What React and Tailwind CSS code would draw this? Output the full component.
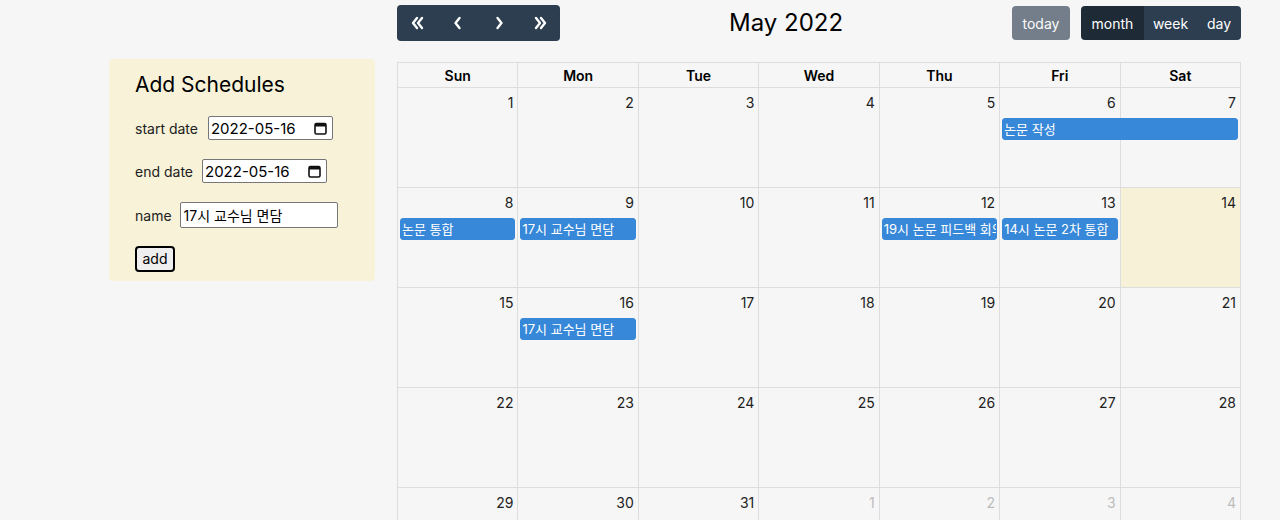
import React from "react";

const FONT = { fontFamily: "Inter, 'Noto Sans CJK KR', sans-serif" };

function Chev({ dir = "left", double = false }) {
  const pts = dir === "left" ? (double ? ["M8 4 L4 9 L8 14", "M13 4 L9 9 L13 14"] : ["M10.5 4 L6.5 9 L10.5 14"]) : (double ? ["M5 4 L9 9 L5 14", "M10 4 L14 9 L10 14"] : ["M7.5 4 L11.5 9 L7.5 14"]);
  return (
    <svg width="18" height="18" viewBox="0 0 18 18" fill="none" stroke="white" strokeWidth="2.4" strokeLinecap="round" strokeLinejoin="round">
      {pts.map((d, i) => <path key={i} d={d} />)}
    </svg>
  );
}

function CalIcon() {
  return (
    <svg width="13" height="13" viewBox="0 0 13 13" fill="none">
      <rect x="1" y="1.5" width="11" height="10.5" rx="1.5" stroke="#111" strokeWidth="1.6" />
      <rect x="1" y="1.5" width="11" height="3" fill="#111" />
    </svg>
  );
}

function DateBox({ w }) {
  return (
    <div className={`flex items-center justify-between h-[24px] bg-white border border-[#767676] rounded-[2px] pl-[2px] pr-[5px] ${w}`}>
      <span className="text-[15px] text-black leading-none">2022-05-16</span>
      <CalIcon />
    </div>
  );
}

const weeks = [
  { days: [1, 2, 3, 4, 5, 6, 7], events: [{ col: "col-start-6 col-span-2", t: "논문 작성" }] },
  {
    days: [8, 9, 10, 11, 12, 13, 14],
    today: 6,
    events: [
      { col: "col-start-1 col-span-1", t: "논문 통합" },
      { col: "col-start-2 col-span-1", t: "17시 교수님 면담" },
      { col: "col-start-5 col-span-1", t: "19시 논문 피드백 회의" },
      { col: "col-start-6 col-span-1", t: "14시 논문 2차 통합" },
    ],
  },
  { days: [15, 16, 17, 18, 19, 20, 21], events: [{ col: "col-start-2 col-span-1", t: "17시 교수님 면담" }] },
  { days: [22, 23, 24, 25, 26, 27, 28], events: [] },
  { days: [29, 30, 31, 1, 2, 3, 4], other: 3, events: [] },
];

const colStarts = ["col-start-1", "col-start-2", "col-start-3", "col-start-4", "col-start-5", "col-start-6", "col-start-7"];

export default function App() {
  return (
    <div className="h-[520px] overflow-hidden bg-[#f6f6f6] flex pl-[109px] text-[#212121]" style={FONT}>
      <div className="w-[266px] h-[222px] mt-[59px] bg-[#f7f2d8] rounded-[4px] pl-[26px] pt-[13px] flex flex-col">
        <h1 className="text-[21px] leading-[26px] text-black">Add Schedules</h1>
        <div className="flex items-center mt-[18px] gap-[10px]">
          <span className="text-[14px]">start date</span>
          <DateBox w="w-[125px]" />
        </div>
        <div className="flex items-center mt-[19px] gap-[9px]">
          <span className="text-[14px]">end date</span>
          <DateBox w="w-[125px]" />
        </div>
        <div className="flex items-center mt-[19px] gap-[8px]">
          <span className="text-[14px]">name</span>
          <div className="w-[158px] h-[26px] bg-white border border-[#767676] rounded-[2px] pl-[3px] flex items-center text-[14px] text-black">
            17시 교수님 면담
          </div>
        </div>
        <div className="mt-[18px]">
          <button className="h-[26px] w-[40px] border-2 border-black rounded-[4px] bg-[#efefef] text-[14px] text-black leading-none">add</button>
        </div>
      </div>

      <div className="ml-[22px] w-[844px] pt-[5px]">
        <div className="flex items-center justify-between h-[36px]">
          <div className="flex h-[36px] bg-[#2c3e50] rounded-[4px] overflow-hidden">
            <button className="w-[41px] flex items-center justify-center"><Chev dir="left" double /></button>
            <button className="w-[40px] flex items-center justify-center"><Chev dir="left" /></button>
            <button className="w-[41px] flex items-center justify-center"><Chev dir="right" /></button>
            <button className="w-[41px] flex items-center justify-center"><Chev dir="right" double /></button>
          </div>
          <h2 className="text-[24px] leading-none text-black">May 2022</h2>
          <div className="flex items-center gap-[11px]">
            <button className="h-[34px] w-[58px] rounded-[4px] bg-[#737e8a] text-[#fcfcfc] text-[14px]">today</button>
            <div className="flex h-[34px] rounded-[4px] overflow-hidden text-[14px] text-white">
              <button className="w-[63px] bg-[#1e2b37]">month</button>
              <button className="w-[53px] bg-[#2c3e50]">week</button>
              <button className="w-[44px] bg-[#2c3e50]">day</button>
            </div>
          </div>
        </div>

        <div className="mt-[21px] border-l border-t border-[#dddddd]">
          <div className="grid grid-cols-7 h-[25px]">
            {["Sun", "Mon", "Tue", "Wed", "Thu", "Fri", "Sat"].map((d) => (
              <div key={d} className="border-r border-b border-[#dddddd] flex items-center justify-center text-[14px] font-semibold text-black">{d}</div>
            ))}
          </div>
          {weeks.map((w, wi) => (
            <div key={wi} className="grid grid-cols-7 grid-rows-[30px_22px_1fr] h-[100px]">
              {w.days.map((d, di) => (
                <div
                  key={di}
                  className={`${colStarts[di]} row-start-1 row-span-3 border-r border-b border-[#dddddd] flex justify-end items-start pt-[5px] pr-[4px] ${w.today === di ? "bg-[#f7f2d7]" : ""}`}
                >
                  <span className={`text-[14px] leading-[20px] ${w.other !== undefined && di >= w.other ? "text-[#bdbdbd]" : "text-[#212121]"}`}>{d}</span>
                </div>
              ))}
              {w.events.map((e, ei) => (
                <div
                  key={ei}
                  className={`${e.col} row-start-2 z-10 ml-[2px] mr-[3px] h-[22px] bg-[#3788d8] border border-[#3788d8] rounded-[3px] text-white text-[13px] leading-[20px] px-[1px] whitespace-nowrap overflow-hidden`}
                >
                  {e.t}
                </div>
              ))}
            </div>
          ))}
        </div>
      </div>
    </div>
  );
}
